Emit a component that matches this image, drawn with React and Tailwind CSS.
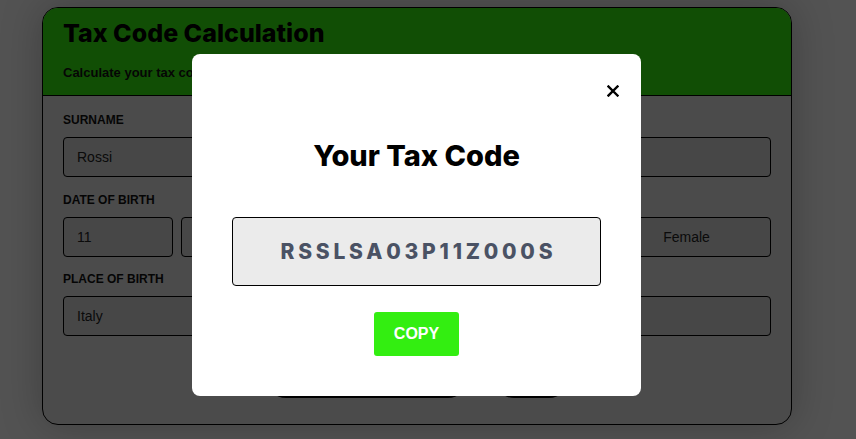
import { useState } from "react";

const Field = ({ label, value, className = "" }) => (
  <div className={className}>
    <label className="block text-[12px] font-bold uppercase leading-4 text-[#111] mb-[9px]">{label}</label>
    <input
      readOnly
      value={value}
      className="w-full h-10 rounded border border-black bg-[#cbcbcb] px-[13px] text-[14px] text-[#222] outline-none"
    />
  </div>
);

const Box = ({ value, center }) => (
  <div
    className={`h-10 flex items-center rounded border border-black bg-[#cbcbcb] text-[14px] text-[#222] ${
      center ? "justify-center" : "px-[13px]"
    }`}
  >
    {value}
  </div>
);

const App = () => {
  const [open, setOpen] = useState(true);
  const code = "RSSLSA03P11Z000S";

  return (
    <div className="min-h-[439px] bg-[#ededed] pt-[7px] pl-[42px] font-['Liberation_Sans',Arial,sans-serif]">
      <div className="w-[750px] h-[418px] rounded-2xl border border-black bg-[#d6d6d6] overflow-hidden shadow-[0_0_40px_rgba(0,0,0,0.25)]">
        <div className="h-[88px] bg-[#33e011] border-b border-black px-5 pt-[9px]">
          <h1 className="font-['Inter',sans-serif] text-[25px] font-extrabold leading-8 text-black">Tax Code Calculation</h1>
          <p className="mt-[14px] text-[13px] font-bold text-[#111]">Calculate your tax code quickly and easily</p>
        </div>
        <div className="px-5 pt-4">
          <div className="grid grid-cols-2 gap-x-4">
            <Field label="Surname" value="Rossi" />
            <Field label="Name" value="Alessia" />
          </div>
          <div className="grid grid-cols-2 gap-x-4 mt-[15px]">
            <div>
              <div className="text-[12px] font-bold uppercase leading-4 text-[#111] mb-[9px]">Date of birth</div>
              <div className="grid grid-cols-3 gap-2">
                <Box value="11" />
                <Box value="September" />
                <Box value="2003" />
              </div>
            </div>
            <div>
              <div className="text-[12px] font-bold uppercase leading-4 text-[#111] mb-[9px]">Gender</div>
              <div className="grid grid-cols-2 gap-2">
                <Box value="Male" center />
                <Box value="Female" center />
              </div>
            </div>
          </div>
          <div className="grid grid-cols-2 gap-x-4 mt-[14px]">
            <Field label="Place of birth" value="Italy" />
            <Field label="Municipality" value="" />
          </div>
          <div className="flex justify-center gap-[26px] mt-[22px]">
            <button className="w-[202px] h-10 rounded-full bg-black text-white text-sm font-bold">CALCULATE</button>
            <button className="w-[75px] h-10 rounded-full bg-black text-white text-sm font-bold">RESET</button>
          </div>
        </div>
      </div>

      {open && (
        <div className="fixed inset-0 bg-black/65">
          <div className="absolute left-[192px] top-[54px] w-[449px] rounded-lg bg-white px-10 pt-[84px] pb-10 flex flex-col items-center">
            <button
              onClick={() => setOpen(false)}
              className="absolute top-[27px] right-[18px] w-5 h-5 flex items-center justify-center"
            >
              <svg width="12" height="12" viewBox="0 0 12 12">
                <path d="M1.5 1.5 L10.5 10.5 M10.5 1.5 L1.5 10.5" stroke="#000" strokeWidth="2.4" strokeLinecap="square" />
              </svg>
            </button>
            <h2 className="font-['Inter',sans-serif] text-[29px] font-extrabold leading-9 text-black">Your Tax Code</h2>
            <div className="mt-[43px] w-full h-[69px] rounded border border-black bg-[#ebebeb] flex items-center justify-center">
              <span className="font-['Inter',sans-serif] text-[21px] font-extrabold tracking-[0.18em] text-[#4a5264] pl-[0.18em]">{code}</span>
            </div>
            <button className="mt-[26px] w-[85px] h-[44px] rounded-[3px] bg-[#33ee11] text-white text-[16px] font-bold">COPY</button>
          </div>
        </div>
      )}
    </div>
  );
};

export default App;
